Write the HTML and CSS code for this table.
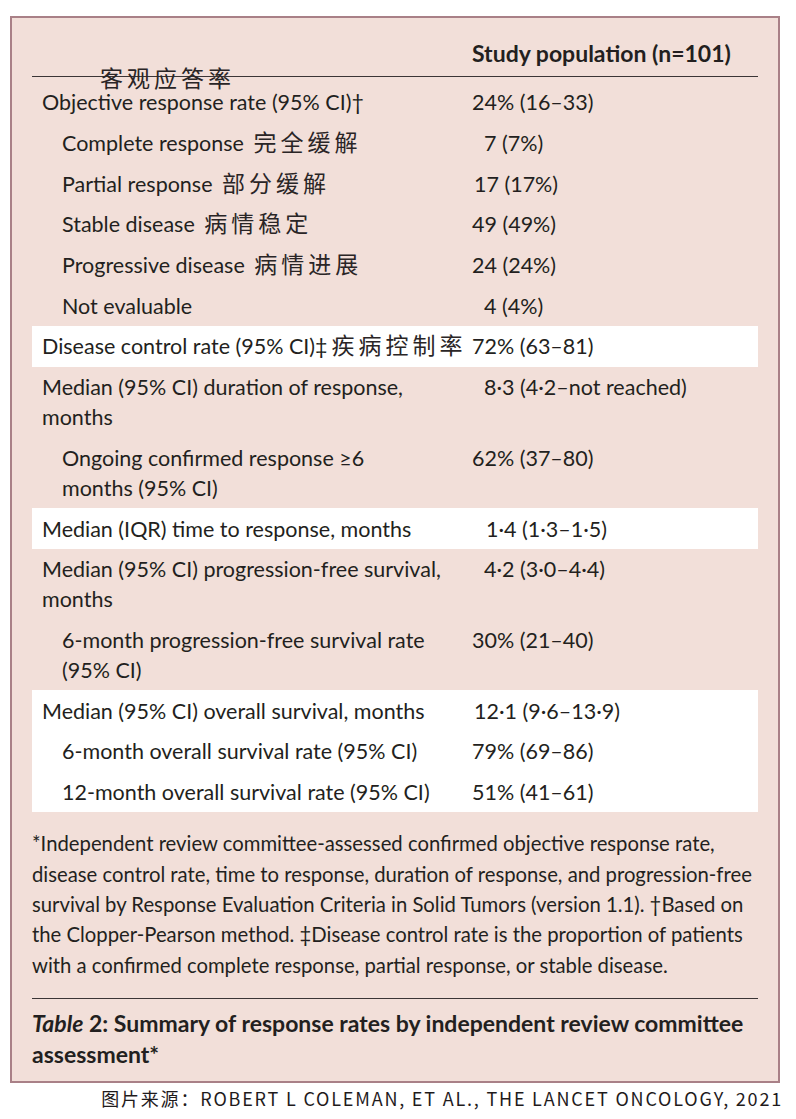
FILE: index.html
```html
<!DOCTYPE html>
<html lang="en">
<head>
<meta charset="utf-8">
<title>Table 2</title>
<link rel="stylesheet" href="styles.css">
</head>
<body>
<div class="page">
  <div class="card">
    <div class="head">
      <div class="hlabel"></div>
      <div class="hval">Study population (n=101)</div>
      <span class="cn-over">客观应答率</span>
    </div>
    <div class="table">
      <div class="row"><div class="lab">Objective response rate (95% CI)†</div><div class="val">24% (16–33)</div></div>
      <div class="row"><div class="lab sub">Complete response <span class="cn">完全缓解</span></div><div class="val p12">7 (7%)</div></div>
      <div class="row"><div class="lab sub">Partial response <span class="cn">部分缓解</span></div><div class="val p2">17 (17%)</div></div>
      <div class="row"><div class="lab sub">Stable disease <span class="cn">病情稳定</span></div><div class="val">49 (49%)</div></div>
      <div class="row"><div class="lab sub">Progressive disease <span class="cn">病情进展</span></div><div class="val">24 (24%)</div></div>
      <div class="row"><div class="lab sub">Not evaluable</div><div class="val p12">4 (4%)</div></div>
      <div class="row band"><div class="lab">Disease control rate (95% CI)‡<span class="cn tight">疾病控制率</span></div><div class="val">72% (63–81)</div></div>
      <div class="row"><div class="lab">Median (95% CI) duration of response,<br>months</div><div class="val p12">8·3 (4·2–not reached)</div></div>
      <div class="row"><div class="lab sub">Ongoing confirmed response ≥6<br>months (95% CI)</div><div class="val">62% (37–80)</div></div>
      <div class="row band"><div class="lab">Median (IQR) time to response, months</div><div class="val p14">1·4 (1·3–1·5)</div></div>
      <div class="row"><div class="lab">Median (95% CI) progression-free survival,<br>months</div><div class="val p12">4·2 (3·0–4·4)</div></div>
      <div class="row"><div class="lab sub">6-month progression-free survival rate<br>(95% CI)</div><div class="val">30% (21–40)</div></div>
      <div class="group band">
        <div class="row"><div class="lab">Median (95% CI) overall survival, months</div><div class="val p2">12·1 (9·6–13·9)</div></div>
        <div class="row"><div class="lab sub">6-month overall survival rate (95% CI)</div><div class="val">79% (69–86)</div></div>
        <div class="row"><div class="lab sub">12-month overall survival rate (95% CI)</div><div class="val">51% (41–61)</div></div>
      </div>
    </div>
    <p class="note">*Independent review committee-assessed confirmed objective response rate,<br>disease control rate, time to response, duration of response, and progression-free<br>survival by Response Evaluation Criteria in Solid Tumors (version 1.1). †Based on<br>the Clopper-Pearson method. ‡Disease control rate is the proportion of patients<br>with a confirmed complete response, partial response, or stable disease.</p>
    <p class="caption"><em>Table</em> 2: Summary of response rates by independent review committee<br>assessment*</p>
  </div>
  <div class="source">图片来源：ROBERT L COLEMAN, ET AL., THE LANCET ONCOLOGY, 2021</div>
</div>
</body>
</html>
```
FILE: styles.css
```css
html, body {
  margin: 0;
  padding: 0;
  background: #ffffff;
}
.page {
  width: 796px;
  padding-top: 16px;
  font-family: Lato, "Liberation Sans", sans-serif;
  color: #231f20;
}
.card {
  margin-left: 10px;
  width: 770px;
  border: 2px solid #a98087;
  background: #f2dfd9;
  padding: 0 20px 11px 20px;
  box-sizing: border-box;
}
.head {
  position: relative;
  display: grid;
  grid-template-columns: 440px 1fr;
  padding: 20px 0 8px;
  border-bottom: 1px solid #3b3536;
  font-size: 23px;
  line-height: 30px;
}
.hval {
  font-weight: 700;
}
.cn-over {
  position: absolute;
  left: 68px;
  top: 45px;
  font-family: "Noto Sans CJK SC", sans-serif;
  font-size: 23px;
  line-height: 28px;
  letter-spacing: 4px;
  color: #2a2526;
}
.table {
  margin-top: 5px;
  font-size: 21.5px;
  line-height: 30px;
}
.row {
  display: grid;
  grid-template-columns: 440px 1fr;
  padding: 5.35px 0;
}
.band {
  background: #ffffff;
}
.group.band .row {
  background: transparent;
}
.lab {
  padding-left: 10px;
  white-space: nowrap;
}
.lab.sub {
  padding-left: 30px;
}
.val {
  white-space: nowrap;
}
.cn {
  font-family: "Noto Sans CJK SC", sans-serif;
  font-size: 23px;
  line-height: 1;
  letter-spacing: 4px;
  margin-left: 4px;
  color: #2a2526;
}
.cn.tight {
  letter-spacing: 4px;
  margin-left: 4px;
}
.p2 { padding-left: 2px; }
.p12 { padding-left: 12px; }
.p14 { padding-left: 14px; }
.note {
  margin: 16px 0 0;
  font-size: 20.3px;
  line-height: 30.3px;
  padding-bottom: 18px;
  border-bottom: 1px solid #3b3536;
  white-space: nowrap;
}
.caption {
  margin: 9px 0 0;
  font-size: 23px;
  line-height: 31px;
  font-weight: 700;
  white-space: nowrap;
}
.caption em {
  font-style: italic;
}
.source {
  margin-top: 3px;
  text-align: right;
  padding-right: 13px;
  font-family: "Noto Sans CJK SC", sans-serif;
  font-size: 18px;
  line-height: 24px;
  letter-spacing: 1.8px;
  color: #1f1b1c;
}
```
